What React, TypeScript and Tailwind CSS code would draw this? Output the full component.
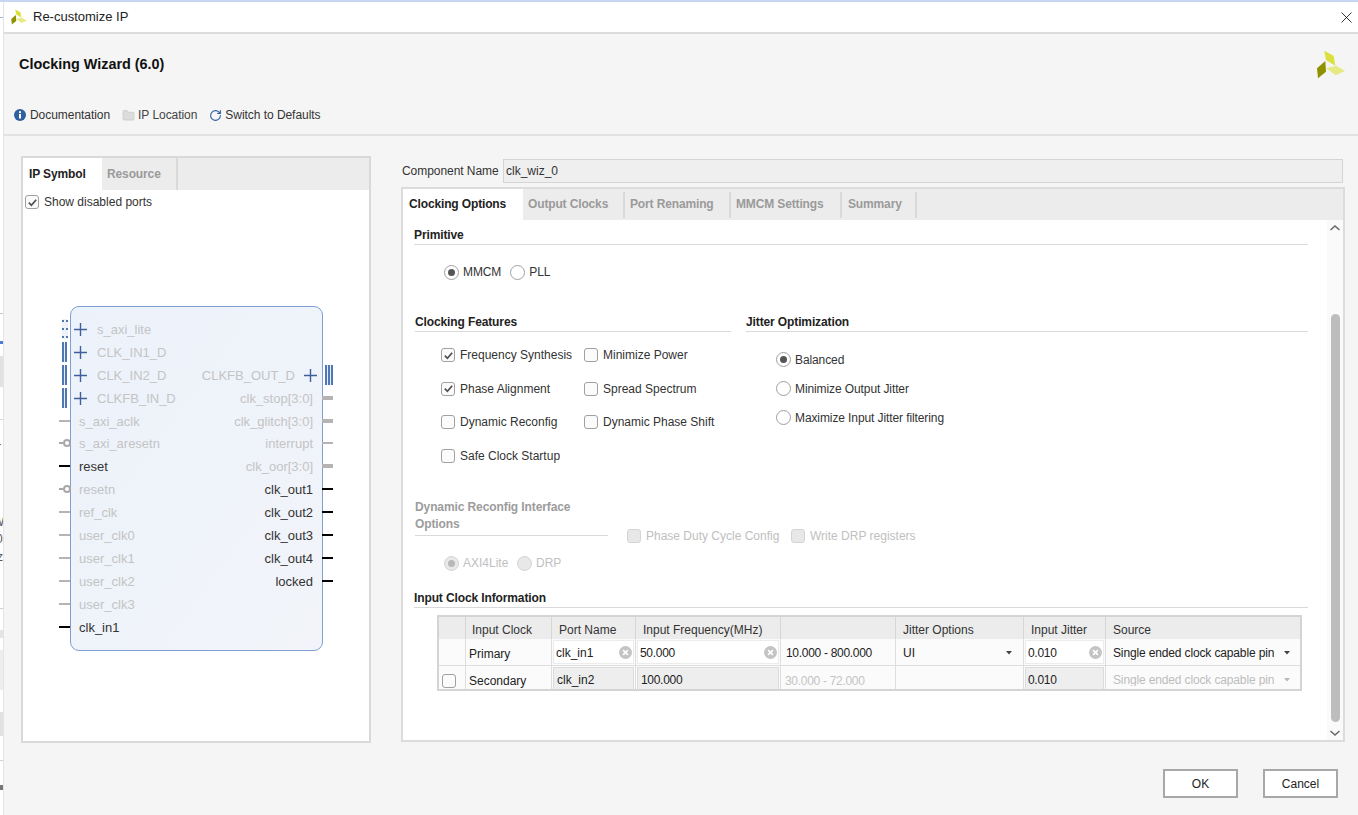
import React from "react";
import { Folder, RotateCw, X } from "lucide-react";

type Stub = "line" | "thick" | "inv" | "bus" | "dots";
type Side = { label: string; on?: boolean; stub: Stub; plus?: boolean };

const rows: { left?: Side; right?: Side }[] = [
  { left: { label: "s_axi_lite", stub: "dots", plus: true } },
  { left: { label: "CLK_IN1_D", stub: "bus", plus: true } },
  {
    left: { label: "CLK_IN2_D", stub: "bus", plus: true },
    right: { label: "CLKFB_OUT_D", stub: "bus", plus: true },
  },
  {
    left: { label: "CLKFB_IN_D", stub: "bus", plus: true },
    right: { label: "clk_stop[3:0]", stub: "thick" },
  },
  {
    left: { label: "s_axi_aclk", stub: "line" },
    right: { label: "clk_glitch[3:0]", stub: "thick" },
  },
  {
    left: { label: "s_axi_aresetn", stub: "inv" },
    right: { label: "interrupt", stub: "line" },
  },
  {
    left: { label: "reset", stub: "line", on: true },
    right: { label: "clk_oor[3:0]", stub: "thick" },
  },
  {
    left: { label: "resetn", stub: "inv" },
    right: { label: "clk_out1", stub: "line", on: true },
  },
  {
    left: { label: "ref_clk", stub: "line" },
    right: { label: "clk_out2", stub: "line", on: true },
  },
  {
    left: { label: "user_clk0", stub: "line" },
    right: { label: "clk_out3", stub: "line", on: true },
  },
  {
    left: { label: "user_clk1", stub: "line" },
    right: { label: "clk_out4", stub: "line", on: true },
  },
  {
    left: { label: "user_clk2", stub: "line" },
    right: { label: "locked", stub: "line", on: true },
  },
  { left: { label: "user_clk3", stub: "line" } },
  { left: { label: "clk_in1", stub: "line", on: true } },
];

function XilinxLogo({ className }: { className: string }) {
  return (
    <svg viewBox="0 0 28 29" className={className}>
      <polygon points="7.3,0.7 16.6,5.7 18.3,15.7 9,10" fill="#dbe03c" />
      <polygon points="19,15.7 28,20.7 19,25.3 9,18.3" fill="#e6ea82" />
      <polygon points="8.3,11 9,21.7 1,28.3 0,18.3" fill="#8f9100" />
    </svg>
  );
}

function CheckBox({ checked, disabled }: { checked?: boolean; disabled?: boolean }) {
  return (
    <span
      className={
        disabled
          ? "flex h-[14px] w-[14px] shrink-0 items-center justify-center rounded-[3px] border border-[#d4d4d4] bg-[#e8e8e8]"
          : "flex h-[14px] w-[14px] shrink-0 items-center justify-center rounded-[3px] border border-[#a0a0a0] bg-[#fbfbfb]"
      }
    >
      {checked && (
        <svg viewBox="0 0 12 12" className="h-[11px] w-[11px]">
          <path d="M2 6.2 L4.8 9 L10 3" fill="none" stroke="#505050" strokeWidth="1.9" />
        </svg>
      )}
    </span>
  );
}

function Radio({ checked, disabled }: { checked?: boolean; disabled?: boolean }) {
  return (
    <span
      className={
        disabled
          ? "flex h-[15px] w-[15px] shrink-0 items-center justify-center rounded-full border border-[#d4d4d4] bg-[#e8e8e8]"
          : "flex h-[15px] w-[15px] shrink-0 items-center justify-center rounded-full border border-[#a0a0a0] bg-white"
      }
    >
      {checked && (
        <span
          className={
            disabled
              ? "h-[7px] w-[7px] rounded-full bg-[#b8b8b8]"
              : "h-[7px] w-[7px] rounded-full bg-[#555]"
          }
        />
      )}
    </span>
  );
}

function Heading({ children }: { children: React.ReactNode }) {
  return (
    <div className="h-[19px] border-b border-[#d9d9d9] text-[12px] leading-[19px] font-bold tracking-[-0.12px] text-[#222]">
      {children}
    </div>
  );
}

function ClearIcon() {
  return (
    <svg viewBox="0 0 12 12" className="h-[13px] w-[13px] shrink-0">
      <circle cx="6" cy="6" r="6" fill="#c4c4c4" />
      <path d="M3.8 3.8 L8.2 8.2 M8.2 3.8 L3.8 8.2" stroke="#fff" strokeWidth="1.5" />
    </svg>
  );
}

function Caret({ light }: { light?: boolean }) {
  return (
    <svg viewBox="0 0 6 4" className="h-[4px] w-[6px] shrink-0">
      <polygon points="0,0 6,0 3,3.5" fill={light ? "#b8b8b8" : "#444"} />
    </svg>
  );
}

function PortStub({ stub, on, side }: { stub: Stub; on?: boolean; side: "left" | "right" }) {
  const pos = side === "left" ? "left-[-12px]" : "right-[-11px]";
  if (stub === "bus") {
    return (
      <span
        className={`absolute ${side === "left" ? "left-[-9px] gap-[1px]" : "right-[-11px] gap-[1px]"} top-[1px] flex h-[20px] bg-[#e6eef8]`}
      >
        <span className="w-[2px] bg-[#4e78b4]" />
        <span className="w-[2px] bg-[#4e78b4]" />
        {side === "right" && <span className="w-[2px] bg-[#4e78b4]" />}
      </span>
    );
  }
  if (stub === "dots") {
    return (
      <span className="absolute top-[1px] left-[-9px] flex h-[20px] w-[6px] flex-col justify-between bg-[#eef3fa] py-[1px]">
        {[0, 1, 2].map((i) => (
          <span key={i} className="flex justify-between">
            <span className="h-[2px] w-[2px] bg-[#4e78b4]" />
            <span className="h-[2px] w-[2px] bg-[#4e78b4]" />
          </span>
        ))}
      </span>
    );
  }
  if (stub === "inv") {
    return (
      <span className="absolute top-[7px] left-[-12px] flex w-[12px] items-center">
        <span className="h-[2px] w-[4px] bg-[#a8a8a8]" />
        <span className="h-[8px] w-[8px] rounded-full border-2 border-[#a8a8a8]" />
      </span>
    );
  }
  const color = on ? "bg-black" : "bg-[#b4b4b4]";
  const size = stub === "thick" ? "top-[9px] h-[4px]" : "top-[10px] h-[2px]";
  return <span className={`absolute ${pos} w-[11px] ${size} ${color}`} />;
}

function Plus() {
  return (
    <svg viewBox="0 0 13 13" className="h-[13px] w-[13px] shrink-0">
      <path d="M6.5 0 V13 M0 6.5 H13" stroke="#3d5f9c" strokeWidth="1.4" />
    </svg>
  );
}

function IpSymbol() {
  return (
    <div className="mt-[97px] ml-[47px] h-[345px] w-[253px] rounded-[9px] border border-[#7f9fd4] bg-gradient-to-br from-[#ecf2fb] to-[#f2f4f9] pt-[11px] text-[13px]">
      {rows.map((r, i) => (
        <div key={i} className="relative flex h-[22.9px] items-center justify-between leading-none">
          {r.left && (
            <div className="flex items-center">
              <PortStub side="left" stub={r.left.stub} on={r.left.on} />
              {r.left.plus && (
                <span className="ml-[3px] w-[23px]">
                  <Plus />
                </span>
              )}
              <span
                className={
                  r.left.plus
                    ? "text-[#c4c4c4]"
                    : r.left.on
                      ? "ml-[8px] text-[#333]"
                      : "ml-[8px] text-[#c4c4c4]"
                }
              >
                {r.left.label}
              </span>
            </div>
          )}
          {r.right && (
            <div className="ml-auto flex items-center">
              <span className={r.right.on ? "mr-[9px] text-[#333]" : "mr-[9px] text-[#c4c4c4]"}>
                {r.right.label}
              </span>
              {r.right.plus && (
                <span className="mr-[5px]">
                  <Plus />
                </span>
              )}
              <PortStub side="right" stub={r.right.stub} on={r.right.on} />
            </div>
          )}
        </div>
      ))}
    </div>
  );
}

function LeftPanel() {
  return (
    <div className="flex h-[587px] w-[350px] shrink-0 flex-col border-2 border-[#d9d9d9] bg-white">
      <div className="flex h-[32px] shrink-0 bg-[#ececec] text-[12px] font-bold tracking-[-0.12px]">
        <div className="flex w-[79px] items-center bg-white pl-[6px] text-[#222]">IP Symbol</div>
        <div className="flex w-[76px] items-center border-r-2 border-[#d9d9d9] pl-[5px] text-[#9a9a9a]">
          Resource
        </div>
      </div>
      <div className="mt-[5px] ml-[2px] flex h-[14px] items-center gap-[5px] text-[12px] text-[#333]">
        <CheckBox checked />
        <span>Show disabled ports</span>
      </div>
      <IpSymbol />
    </div>
  );
}

function CheckRow({ label, checked }: { label: string; checked?: boolean }) {
  return (
    <div className="flex items-center gap-[5px]">
      <CheckBox checked={checked} />
      <span>{label}</span>
    </div>
  );
}

function RadioRow({ label, checked }: { label: string; checked?: boolean }) {
  return (
    <div className="flex items-center gap-[4px] tracking-[-0.1px]">
      <Radio checked={checked} />
      <span>{label}</span>
    </div>
  );
}

const headCell = "flex items-center border-r border-[#d6d6d6] bg-[#ececec] pt-[3px] text-[#333]";
const rowCell = "flex items-center border-r border-b border-[#dedede] bg-[#fbfbfb] text-[#222]";
const lastCell = "flex overflow-hidden border-r border-[#dedede] bg-[#fbfbfb] text-[#222]";

function InputCell({ value, pad, num }: { value: string; pad: string; num?: boolean }) {
  return (
    <div className={`${rowCell} p-[1px]`}>
      <div className={`flex h-full w-full items-center justify-between border border-[#ececec] bg-white ${pad} pr-[1px]`}>
        <span className={num ? "pt-[1px] tracking-[-0.3px]" : "pt-[1px]"}>{value}</span>
        <ClearIcon />
      </div>
    </div>
  );
}

function ClockTable() {
  return (
    <div className="mt-[7px] ml-[23px] grid h-[76px] w-[865px] grid-cols-[27px_86px_84px_145px_115px_128px_82px_194px] grid-rows-[22px_27px_23px] border-2 border-[#d4d4d4] text-[12px] leading-none">
      <div className={headCell} />
      <div className={`${headCell} pl-[6px]`}>Input Clock</div>
      <div className={`${headCell} pl-[7px]`}>Port Name</div>
      <div className={`${headCell} pl-[7px]`}>Input Frequency(MHz)</div>
      <div className={headCell} />
      <div className={`${headCell} pl-[7px]`}>Jitter Options</div>
      <div className={`${headCell} pl-[7px]`}>Input Jitter</div>
      <div className={`${headCell} border-r-0 pl-[7px]`}>Source</div>

      <div className={rowCell} />
      <div className={`${rowCell} pt-[3px] pl-[3px]`}>Primary</div>
      <InputCell value="clk_in1" pad="pl-[2px]" />
      <InputCell value="50.000" pad="pl-[2px]" num />
      <div className={`${rowCell} pt-[2px] pl-[5px] tracking-[-0.3px]`}>10.000 - 800.000</div>
      <div className={`${rowCell} justify-between pt-[1px] pr-[11px] pl-[7px]`}>
        <span>UI</span>
        <Caret />
      </div>
      <InputCell value="0.010" pad="pl-[2px]" num />
      <div className={`${rowCell} justify-between border-r-0 pt-[1px] pr-[10px] pl-[7px]`}>
        <span className="tracking-[-0.14px]">Single ended clock capable pin</span>
        <Caret />
      </div>

      <div className={`${lastCell} items-start pt-[8px] pl-[3px]`}>
        <CheckBox />
      </div>
      <div className={`${lastCell} items-start pt-[9px] pl-[3px]`}>Secondary</div>
      <div className={`${lastCell} p-[1px] pb-0`}>
        <div className="flex w-full items-start border border-b-0 border-[#dcdcdc] bg-[#eeeeee] pt-[6px] pl-[3px]">clk_in2</div>
      </div>
      <div className={`${lastCell} p-[1px] pb-0`}>
        <div className="flex w-full items-start border border-b-0 border-[#dcdcdc] bg-[#eeeeee] pt-[6px] pl-[3px] tracking-[-0.3px]">100.000</div>
      </div>
      <div className={`${lastCell} items-start pt-[9px] pl-[4px] tracking-[-0.3px] text-[#c4c4c4]`}>30.000 - 72.000</div>
      <div className={lastCell} />
      <div className={`${lastCell} p-[1px] pb-0`}>
        <div className="flex w-full items-start border border-b-0 border-[#dcdcdc] bg-[#eeeeee] pt-[6px] pl-[2px] tracking-[-0.3px]">0.010</div>
      </div>
      <div className={`${lastCell} items-start justify-between border-r-0 pt-[8px] pr-[10px] pl-[7px] text-[#bdbdbd]`}>
        <span className="w-[161px] overflow-hidden tracking-[-0.14px] whitespace-nowrap">Single ended clock capable pin</span>
        <span className="pt-[4px]">
          <Caret light />
        </span>
      </div>
    </div>
  );
}

function ClockingOptions() {
  return (
    <div className="w-[924px] shrink-0 pl-[11px] text-[12px] text-[#333]">
      <div className="mt-[6px] w-[894px]">
        <Heading>Primitive</Heading>
      </div>
      <div className="mt-[17px] ml-[30px] flex h-[20px] items-center gap-[9px]">
        <RadioRow label="MMCM" checked />
        <RadioRow label="PLL" />
      </div>

      <div className="mt-[31px] flex h-[185px]">
        <div className="ml-[1px] w-[316px]">
          <Heading>Clocking Features</Heading>
          <div className="mt-[6.5px] ml-[26px] grid auto-rows-[33.5px] grid-cols-[143px_1fr] items-center">
            <CheckRow label="Frequency Synthesis" checked />
            <CheckRow label="Minimize Power" />
            <CheckRow label="Phase Alignment" checked />
            <CheckRow label="Spread Spectrum" />
            <CheckRow label="Dynamic Reconfig" />
            <CheckRow label="Dynamic Phase Shift" />
            <CheckRow label="Safe Clock Startup" />
          </div>
        </div>
        <div className="ml-[15px] w-[562px]">
          <Heading>Jitter Optimization</Heading>
          <div className="mt-[13px] ml-[30px] grid auto-rows-[29px] items-center">
            <RadioRow label="Balanced" checked />
            <RadioRow label="Minimize Output Jitter" />
            <RadioRow label="Maximize Input Jitter filtering" />
          </div>
        </div>
      </div>

      <div className="ml-[1px] flex h-[48px] items-start">
        <div className="mt-[1px] h-[37px] w-[193px] border-b border-[#d9d9d9] text-[12px] leading-[17px] font-bold tracking-[-0.1px] text-[#9c9c9c]">
          Dynamic Reconfig Interface Options
        </div>
        <div className="mt-[31px] ml-[19px] flex h-[14px] items-center text-[#c0c0c0]">
          <CheckBox disabled />
          <span className="ml-[5px] w-[145px]">Phase Duty Cycle Config</span>
          <CheckBox disabled />
          <span className="ml-[5px]">Write DRP registers</span>
        </div>
      </div>

      <div className="mt-[7px] ml-[30px] flex h-[20px] items-center text-[#c0c0c0]">
        <Radio checked disabled />
        <span className="ml-[4px] w-[54px]">AXI4Lite</span>
        <Radio disabled />
        <span className="ml-[4px]">DRP</span>
      </div>

      <div className="mt-[16px] w-[894px]">
        <Heading>Input Clock Information</Heading>
      </div>
      <ClockTable />
    </div>
  );
}

function ScrollBar() {
  return (
    <div className="flex w-[16px] shrink-0 flex-col items-center bg-[#fafafa]">
      <svg viewBox="0 0 10 6" className="mt-[5px] h-[6px] w-[10px]">
        <path d="M0.5 5 L5 1 L9.5 5" fill="none" stroke="#666" strokeWidth="1.5" />
      </svg>
      <div className="mt-[83px] h-[408px] w-[9px] rounded-full bg-[#bdbdbd]" />
      <svg viewBox="0 0 10 6" className="mt-[8px] h-[6px] w-[10px]">
        <path d="M0.5 1 L5 5 L9.5 1" fill="none" stroke="#666" strokeWidth="1.5" />
      </svg>
    </div>
  );
}

function RightPanel() {
  const tabs = [
    { name: "Output Clocks", w: "w-[102px] pl-[5px]" },
    { name: "Port Renaming", w: "w-[106px] pl-[5px]" },
    { name: "MMCM Settings", w: "w-[111px] pl-[5px]" },
    { name: "Summary", w: "w-[75px] pl-[6px]" },
  ];
  return (
    <div className="w-[944px] shrink-0">
      <div className="mt-[3px] flex h-[24px] items-center text-[12px] text-[#333]">
        <span className="ml-[1px] w-[101px] pb-[1px] tracking-[-0.05px]">Component Name</span>
        <div className="flex h-full w-[840px] items-center border border-[#d4d4d4] bg-[#efefef] pl-[2px]">clk_wiz_0</div>
      </div>
      <div className="mt-[4px] flex h-[555px] flex-col border-2 border-[#dcdcdc] bg-white">
        <div className="flex h-[31px] shrink-0 items-center bg-[#ececec] text-[12px] font-bold tracking-[-0.14px] text-[#9a9a9a]">
          <div className="flex h-full w-[120px] items-center bg-white pb-[1px] pl-[6px] text-[#222]">Clocking Options</div>
          {tabs.map((t) => (
            <div key={t.name} className={`flex h-[26px] items-center border-r-2 border-[#d9d9d9] pb-[1px] ${t.w}`}>
              {t.name}
            </div>
          ))}
        </div>
        <div className="flex min-h-0 flex-1 justify-between">
          <ClockingOptions />
          <ScrollBar />
        </div>
      </div>
    </div>
  );
}

// sliver of the window behind the dialog, left edge of the shot
function BehindStrip() {
  return (
    <div className="flex w-[3px] shrink-0 flex-col overflow-hidden bg-white text-[12px] leading-[10px] text-[#555]">
      <div className="mt-[15px] h-[1px] bg-[#9db8e6]" />
      <div className="mt-[295px] h-[1px] bg-[#c8c8c8]" />
      <div className="mt-[9px] ml-[-1px] h-[8px] w-[3px] border-l border-[#888]" />
      <div className="mt-[10px] h-[3px] bg-[#4a7bd0]" />
      <div className="mt-[12px] h-[31px] bg-[#e2e2e2]" />
      <div className="mt-[32px] h-[1px] bg-[#dcdcdc]" />
      <div className="mt-[22px] ml-[-3px] h-[10px]">r</div>
      <div className="mt-[65px] ml-[-7px] h-[10px]">W</div>
      <div className="mt-[7px] ml-[-4px] h-[10px]">0</div>
      <div className="mt-[8px] ml-[-3px] h-[10px]">z</div>
      <div className="mt-[46px] h-[1px] bg-[#cfcfcf]" />
      <div className="mt-[21px] h-[8px] bg-[#e4e4e4]" />
      <div className="mt-[12px] h-[40px] bg-[#ededed]" />
      <div className="mt-[22px] h-[24px] bg-[#e2e2e2]" />
      <div className="mt-[24px] h-[1px] bg-[#d0d0d0]" />
      <div className="mt-[24px] h-[5px] bg-[#777]" />
    </div>
  );
}

export default function App() {
  return (
    <div className="flex h-[815px] w-[1358px] flex-col overflow-hidden bg-white font-['Liberation_Sans',Arial,sans-serif]">
      <div className="h-[2px] shrink-0 bg-[#c6d6f0]" />
      <div className="flex min-h-0 flex-1">
        <BehindStrip />
        <div className="flex min-w-0 flex-1 flex-col border-l border-[#e4e4e4] bg-[#f5f5f5]">
          <div className="flex h-[32px] shrink-0 items-center justify-between border-b-2 border-[#dcdcdc] bg-white pr-[2px] pl-[7px]">
            <div className="flex items-center gap-[6px] text-[13px] text-[#222]">
              <XilinxLogo className="h-[16px] w-[16px]" />
              <span>Re-customize IP</span>
            </div>
            <X size={19} strokeWidth={1} className="text-black" />
          </div>

          <div className="flex h-[60px] shrink-0 items-center justify-between pr-[13px] pl-[15px]">
            <span className="pt-[1px] text-[14.4px] font-bold text-[#111]">Clocking Wizard (6.0)</span>
            <XilinxLogo className="h-[29px] w-[28px]" />
          </div>

          <div className="flex h-[42px] shrink-0 items-center border-b-2 border-[#e2e2e2] pt-[2px] pl-[10px] text-[12px] text-[#333]">
            <svg viewBox="0 0 12 12" className="h-[12px] w-[12px]">
              <circle cx="6" cy="6" r="6" fill="#2f5f9e" />
              <rect x="5" y="5" width="2" height="4.5" fill="#fff" />
              <circle cx="6" cy="3.2" r="1.1" fill="#fff" />
            </svg>
            <span className="ml-[4px] tracking-[-0.05px]">Documentation</span>
            <Folder size={13} className="ml-[12px] fill-[#dcdcdc] text-[#d0d0d0]" />
            <span className="ml-[3px] tracking-[-0.05px] text-[#444]">IP Location</span>
            <RotateCw size={13} strokeWidth={2} className="ml-[12px] text-[#2f5f9e]" />
            <span className="ml-[3px] tracking-[-0.05px]">Switch to Defaults</span>
          </div>

          <div className="flex shrink-0 gap-[30px] pt-[20px] pl-[17px]">
            <LeftPanel />
            <RightPanel />
          </div>

          <div className="flex justify-end gap-[25px] pt-[26px] pr-[20px] text-[12px] text-[#222]">
            <button className="h-[29px] w-[75px] border-2 border-[#a8a8a8] bg-white">OK</button>
            <button className="h-[29px] w-[75px] border-2 border-[#a8a8a8] bg-white">Cancel</button>
          </div>
        </div>
      </div>
    </div>
  );
}
